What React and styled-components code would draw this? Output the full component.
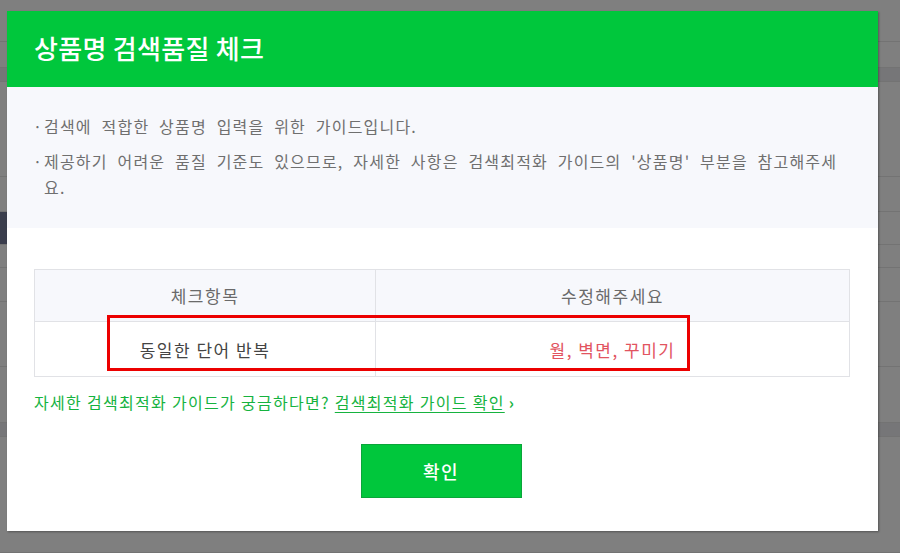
import React from "react";
import styled, { createGlobalStyle } from "styled-components";

const GlobalStyle = createGlobalStyle`
    html, body {
        margin: 0;
        padding: 0;
    }
    body {
        width: 900px;
        height: 553px;
        overflow: hidden;
        font-family: "Noto Sans CJK KR", "Noto Sans", sans-serif;
        background-color: #7f7f7f;
    }
    ul {
        margin: 0;
        padding: 0;
        list-style: none;
    }
`

const ghostRows = [
    { h: 42 },
    { h: 26 },
    { h: 14, band: true },
    { h: 95 },
    { h: 35 },
    { h: 33, dark: true },
    { h: 23 },
    { h: 34 },
    { h: 65 },
    { h: 56 },
    { h: 14, band: true },
    { h: 116 },
]

function App() {
    return (
        <>
            <GlobalStyle />
            <Screen>
                <Backdrop>
                    {ghostRows.map((row, index) => (
                        <GhostRow key={index} $h={row.h} $band={row.band} $dark={row.dark} />
                    ))}
                </Backdrop>
                <Modal>
                    <Header>
                        <h1>상품명 검색품질 체크</h1>
                    </Header>
                    <InfoBox>
                        <ul>
                            <li>
                                <span className="dot">·</span>
                                <span>검색에 적합한 상품명 입력을 위한 가이드입니다.</span>
                            </li>
                            <li>
                                <span className="dot">·</span>
                                <span>제공하기 어려운 품질 기준도 있으므로, 자세한 사항은 검색최적화 가이드의 '상품명' 부분을 참고해주세요.</span>
                            </li>
                        </ul>
                    </InfoBox>
                    <Content>
                        <TableWrap>
                            <CheckTable>
                                <thead>
                                    <tr>
                                        <th className="first">체크항목</th>
                                        <th>수정해주세요</th>
                                    </tr>
                                </thead>
                                <tbody>
                                    <tr>
                                        <td>동일한 단어 반복</td>
                                        <td className="fix">월, 벽면, 꾸미기</td>
                                    </tr>
                                </tbody>
                            </CheckTable>
                            <Highlight />
                        </TableWrap>
                        <GuideLink>
                            자세한 검색최적화 가이드가 궁금하다면? <u>검색최적화 가이드 확인</u>
                            <span className="arrow">›</span>
                        </GuideLink>
                        <ButtonRow>
                            <ConfirmButton>확인</ConfirmButton>
                        </ButtonRow>
                    </Content>
                </Modal>
            </Screen>
        </>
    )
}
export default App

const Screen = styled.div`
    position: relative;
    width: 900px;
    height: 553px;
    overflow: hidden;
    background-color: #7f7f7f;
`

const Backdrop = styled.div`
    display: flex;
    flex-direction: column;
`

const GhostRow = styled.div`
    height: ${(p) => p.$h}px;
    border-bottom: 1px solid #737373;
    background-color: ${(p) => (p.$band ? "#767678" : "transparent")};
    box-sizing: border-box;
    ${(p) => p.$dark && `
        background: linear-gradient(90deg, #3a3d4c 0 7px, transparent 7px);
    `}
`

const Modal = styled.div`
    position: absolute;
    left: 7px;
    top: 11px;
    width: 871px;
    height: 520px;
    background-color: #ffffff;
    box-shadow: 1px 1px 2px rgba(0, 0, 0, 0.35);
    display: flex;
    flex-direction: column;
`

const Header = styled.div`
    height: 76px;
    background-color: #00c73c;
    display: flex;
    align-items: center;
    padding: 0 27px;

    h1 {
        margin: 0 0 4px;
        font-size: 26px;
        font-weight: 500;
        color: #ffffff;
        letter-spacing: 0.3px;
    }
`

const InfoBox = styled.div`
    height: 141px;
    box-sizing: border-box;
    background-color: #f7f8fc;
    padding: 26px 32px 0 26px;

    li {
        display: flex;
        font-size: 16px;
        line-height: 26px;
        color: #6f6f6f;
        letter-spacing: 1.2px;
        word-spacing: 5px;
    }
    li + li {
        margin-top: 9px;
    }
    .dot {
        flex: none;
        width: 11px;
        letter-spacing: 0;
    }
`

const Content = styled.div`
    padding: 41px 28px 0 27px;
    display: flex;
    flex-direction: column;
`

const TableWrap = styled.div`
    position: relative;
`

const CheckTable = styled.table`
    width: 816px;
    border-collapse: collapse;
    table-layout: fixed;
    font-size: 17px;
    letter-spacing: 1.5px;

    th, td {
        border: 1px solid #e1e2e6;
        text-align: center;
        font-weight: normal;
        padding: 0;
    }
    th {
        height: 51px;
        background-color: #f7f8fc;
        color: #6a6a6a;
    }
    th.first {
        width: 340px;
    }
    td {
        height: 54px;
        color: #444444;
    }
    td.fix {
        color: #e2545f;
    }
`

const Highlight = styled.div`
    position: absolute;
    left: 73px;
    top: 46px;
    width: 583px;
    height: 56px;
    box-sizing: border-box;
    border: 3px solid #ec0000;
`

const GuideLink = styled.p`
    margin: 15px 0 0;
    font-size: 16px;
    line-height: 20px;
    color: #16b33f;
    letter-spacing: 1.3px;

    u {
        text-underline-offset: 3px;
    }
    .arrow {
        margin-left: 4px;
        font-weight: bold;
    }
`

const ButtonRow = styled.div`
    display: flex;
    justify-content: center;
    margin-top: 32px;
    padding-right: 2px;
`

const ConfirmButton = styled.button`
    width: 161px;
    height: 54px;
    background-color: #00c73c;
    border: 1px solid #0aa53a;
    color: #ffffff;
    font-family: inherit;
    font-size: 18px;
    font-weight: 500;
    letter-spacing: 1.5px;
`
